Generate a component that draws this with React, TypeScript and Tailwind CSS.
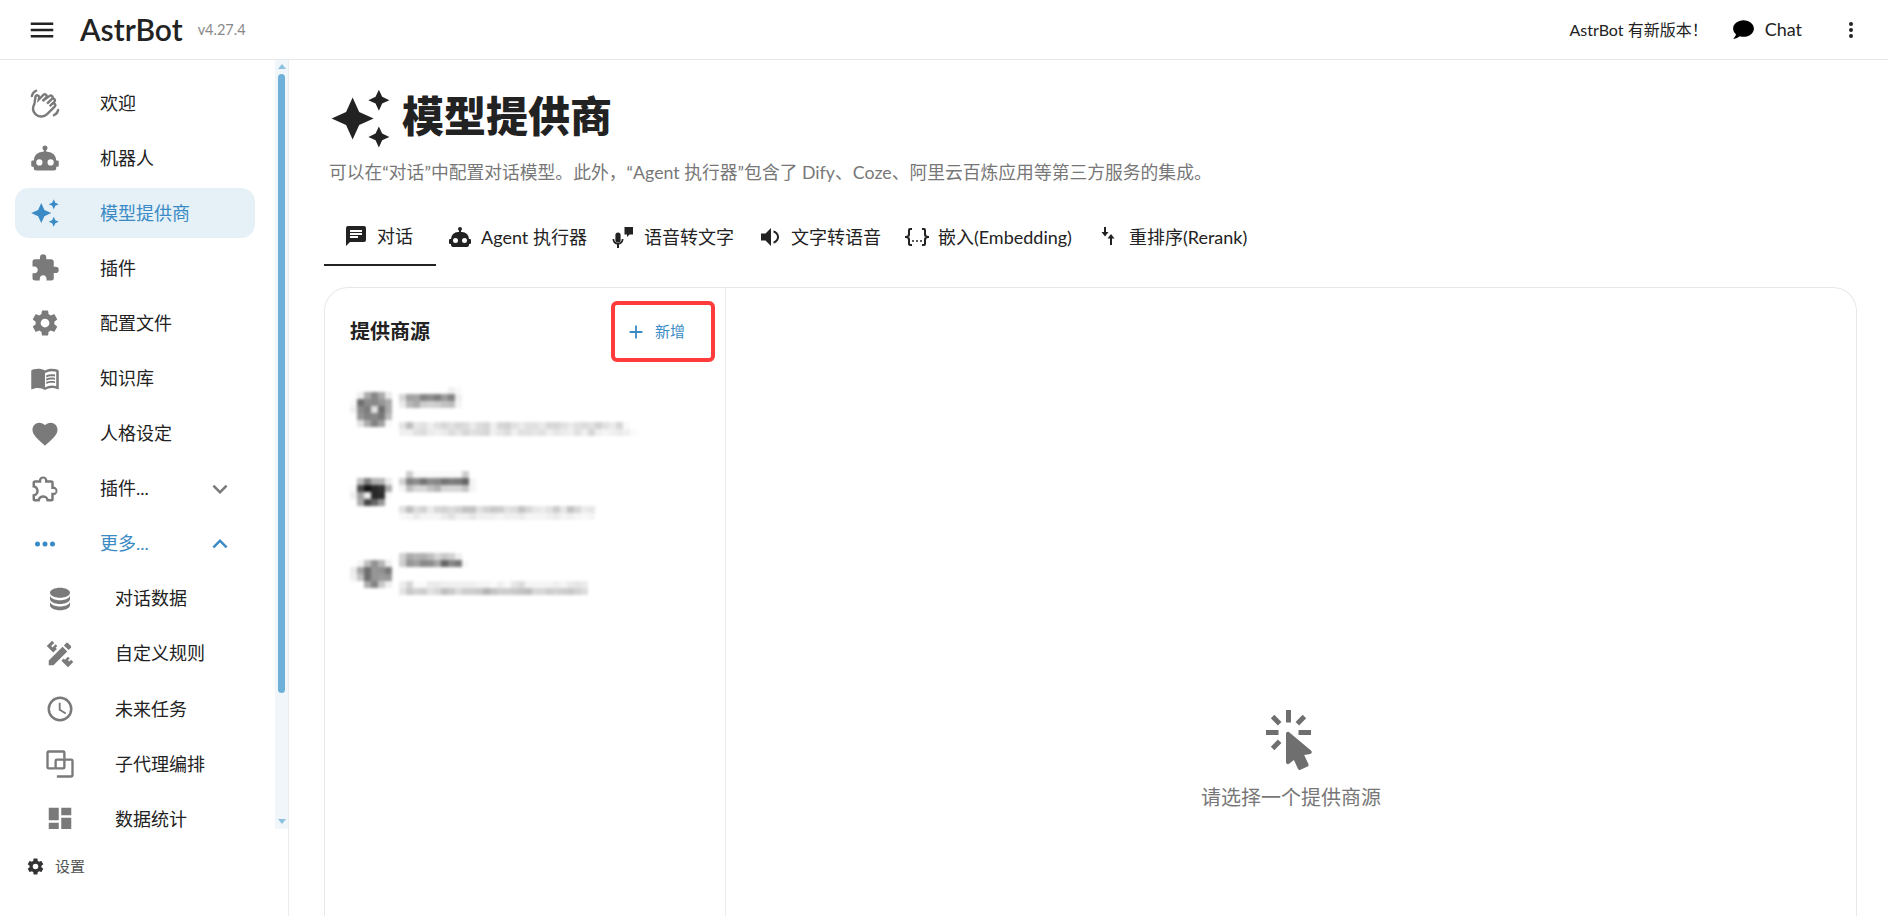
const font = 'font-["Lato","Noto_Sans_CJK_SC",sans-serif]';

const P = {
  menu: 'M3,6H21V8H3V6M3,11H21V13H3V11M3,16H21V18H3V16Z',
  robot: 'M12,2A2,2 0 0,1 14,4C14,4.74 13.6,5.39 13,5.73V7H14A7,7 0 0,1 21,14H22A1,1 0 0,1 23,15V18A1,1 0 0,1 22,19H21V20A2,2 0 0,1 19,22H5A2,2 0 0,1 3,20V19H2A1,1 0 0,1 1,18V15A1,1 0 0,1 2,14H3A7,7 0 0,1 10,7H11V5.73C10.4,5.39 10,4.74 10,4A2,2 0 0,1 12,2M7.5,13A2.5,2.5 0 0,0 5,15.5A2.5,2.5 0 0,0 7.5,18A2.5,2.5 0 0,0 10,15.5A2.5,2.5 0 0,0 7.5,13M16.5,13A2.5,2.5 0 0,0 14,15.5A2.5,2.5 0 0,0 16.5,18A2.5,2.5 0 0,0 19,15.5A2.5,2.5 0 0,0 16.5,13Z',
  creation: 'M19,1L17.74,3.75L15,5L17.74,6.26L19,9L20.25,6.26L23,5L20.25,3.75M9,4L6.5,9.5L1,12L6.5,14.5L9,20L11.5,14.5L17,12L11.5,9.5M19,15L17.74,17.74L15,19L17.74,20.25L19,23L20.25,20.25L23,19L20.25,17.74',
  puzzle: 'M20.5,11H19V7C19,5.89 18.1,5 17,5H13V3.5A2.5,2.5 0 0,0 10.5,1A2.5,2.5 0 0,0 8,3.5V5H4A2,2 0 0,0 2,7V10.8H3.5C5,10.8 6.2,12 6.2,13.5C6.2,15 5,16.2 3.5,16.2H2V20A2,2 0 0,0 4,22H7.8V20.5C7.8,19 9,17.8 10.5,17.8C12,17.8 13.2,19 13.2,20.5V22H17A2,2 0 0,0 19,20V16H20.5A2.5,2.5 0 0,0 23,13.5A2.5,2.5 0 0,0 20.5,11Z',
  puzzleOutline: 'M22,13.5C22,15.26 20.7,16.72 19,16.96V20A2,2 0 0,1 17,22H13.2V21.7A2.7,2.7 0 0,0 10.5,19C9,19 7.8,20.21 7.8,21.7V22H4A2,2 0 0,1 2,20V16.2H2.3C3.79,16.2 5,15 5,13.5C5,12 3.79,10.8 2.3,10.8H2V7A2,2 0 0,1 4,5H7.04C7.28,3.3 8.74,2 10.5,2C12.26,2 13.72,3.3 13.96,5H17A2,2 0 0,1 19,7V10.04C20.7,10.28 22,11.74 22,13.5M17,15H19A1.5,1.5 0 0,0 20.5,13.5A1.5,1.5 0 0,0 19,12H17V7H12V5A1.5,1.5 0 0,0 10.5,3.5A1.5,1.5 0 0,0 9,5V7H4V9.12C5.76,9.8 7,11.5 7,13.5C7,15.5 5.75,17.2 4,17.88V20H6.12C6.8,18.25 8.5,17 10.5,17C12.5,17 14.2,18.25 14.88,20H17V15Z',
  cog: 'M12,15.5A3.5,3.5 0 0,1 8.5,12A3.5,3.5 0 0,1 12,8.5A3.5,3.5 0 0,1 15.5,12A3.5,3.5 0 0,1 12,15.5M19.43,12.97C19.47,12.65 19.5,12.33 19.5,12C19.5,11.67 19.47,11.34 19.43,11L21.54,9.37C21.73,9.22 21.78,8.95 21.66,8.73L19.66,5.27C19.54,5.05 19.27,4.96 19.05,5.05L16.56,6.05C16.04,5.66 15.5,5.32 14.87,5.07L14.5,2.42C14.46,2.18 14.25,2 14,2H10C9.75,2 9.54,2.18 9.5,2.42L9.13,5.07C8.5,5.32 7.96,5.66 7.44,6.05L4.95,5.05C4.73,4.96 4.46,5.05 4.34,5.27L2.34,8.73C2.21,8.95 2.27,9.22 2.46,9.37L4.57,11C4.53,11.34 4.5,11.67 4.5,12C4.5,12.33 4.53,12.65 4.57,12.97L2.46,14.63C2.27,14.78 2.21,15.05 2.34,15.27L4.34,18.73C4.46,18.95 4.73,19.03 4.95,18.95L7.44,17.94C7.96,18.34 8.5,18.68 9.13,18.93L9.5,21.58C9.54,21.82 9.75,22 10,22H14C14.25,22 14.46,21.82 14.5,21.58L14.87,18.93C15.5,18.67 16.04,18.34 16.56,17.94L19.05,18.95C19.27,19.03 19.54,18.95 19.66,18.73L21.66,15.27C21.78,15.05 21.73,14.78 21.54,14.63L19.43,12.97Z',
  book: 'M12 21.5C10.65 20.65 8.2 20 6.5 20C4.85 20 3.15 20.3 1.75 21.05C1.65 21.1 1.6 21.1 1.5 21.1C1.25 21.1 1 20.85 1 20.6V6C1.6 5.55 2.25 5.25 3 5C4.11 4.65 5.33 4.5 6.5 4.5C8.45 4.5 10.55 4.9 12 6C13.45 4.9 15.55 4.5 17.5 4.5C18.67 4.5 19.89 4.65 21 5C21.75 5.25 22.4 5.55 23 6V20.6C23 20.85 22.75 21.1 22.5 21.1C22.4 21.1 22.35 21.1 22.25 21.05C20.85 20.3 19.15 20 17.5 20C15.8 20 13.35 20.65 12 21.5M12 8V19.5C13.35 18.65 15.8 18 17.5 18C18.7 18 19.9 18.15 21 18.5V7C19.9 6.65 18.7 6.5 17.5 6.5C15.8 6.5 13.35 7.15 12 8M13 11.5C14.11 10.82 15.6 10.5 17.5 10.5C18.41 10.5 19.26 10.59 20 10.78V9.23C19.13 9.08 18.29 9 17.5 9C15.73 9 14.23 9.28 13 9.84V11.5M17.5 11.67C15.79 11.67 14.29 11.93 13 12.46V14.15C14.11 13.5 15.6 13.16 17.5 13.16C18.54 13.16 19.38 13.24 20 13.4V11.9C19.13 11.74 18.29 11.67 17.5 11.67M20 14.57C19.13 14.41 18.29 14.33 17.5 14.33C15.67 14.33 14.17 14.6 13 15.13V16.82C14.11 16.16 15.6 15.83 17.5 15.83C18.54 15.83 19.38 15.91 20 16.07V14.57Z',
  heart: 'M12,21.35L10.55,20.03C5.4,15.36 2,12.27 2,8.5C2,5.41 4.42,3 7.5,3C9.24,3 10.91,3.81 12,5.08C13.09,3.81 14.76,3 16.5,3C19.58,3 22,5.41 22,8.5C22,12.27 18.6,15.36 13.45,20.03L12,21.35Z',
  dots: 'M16,12A2,2 0 0,1 18,10A2,2 0 0,1 20,12A2,2 0 0,1 18,14A2,2 0 0,1 16,12M10,12A2,2 0 0,1 12,10A2,2 0 0,1 14,12A2,2 0 0,1 12,14A2,2 0 0,1 10,12M4,12A2,2 0 0,1 6,10A2,2 0 0,1 8,12A2,2 0 0,1 6,14A2,2 0 0,1 4,12Z',
  chevronDown: 'M7.41,8.58L12,13.17L16.59,8.58L18,10L12,16L6,10L7.41,8.58Z',
  chevronUp: 'M7.41,15.41L12,10.83L16.59,15.41L18,14L12,8L6,14L7.41,15.41Z',
  database: 'M12,3C7.58,3 4,4.79 4,7C4,9.21 7.58,11 12,11C16.42,11 20,9.21 20,7C20,4.79 16.42,3 12,3M4,9V12C4,14.21 7.58,16 12,16C16.42,16 20,14.21 20,12V9C20,11.21 16.42,13 12,13C7.58,13 4,11.21 4,9M4,14V17C4,19.21 7.58,21 12,21C16.42,21 20,19.21 20,17V14C20,16.21 16.42,18 12,18C7.58,18 4,16.21 4,14Z',
  ruler: 'M3 17.25V21H6.75L17.81 9.93L14.06 6.18L3 17.25M22.61 18.36L18.36 22.61L13.16 17.41L14.93 15.64L15.93 16.64L18.4 14.16L19.82 15.58L18.36 17L19.42 18L20.84 16.6L22.61 18.36M6.61 10.83L1.39 5.64L5.64 1.39L7.4 3.16L4.93 5.64L6 6.7L8.46 4.22L9.88 5.64L8.46 7.05L9.46 8.05L6.61 10.83M20.71 7C21.1 6.61 21.1 6 20.71 5.59L18.37 3.29C18 2.9 17.35 2.9 16.96 3.29L15.12 5.12L18.87 8.87L20.71 7Z',
  clock: 'M12,20A8,8 0 0,0 20,12A8,8 0 0,0 12,4A8,8 0 0,0 4,12A8,8 0 0,0 12,20M12,2A10,10 0 0,1 22,12A10,10 0 0,1 12,22C6.47,22 2,17.5 2,12A10,10 0 0,1 12,2M12.5,7V12.25L17,14.92L16.25,16.15L11,13V7H12.5Z',
  dashboard: 'M13,3V9H21V3M13,21H21V11H13M3,21H11V15H3M3,13H11V3H3V13Z',
  message: 'M20,2H4A2,2 0 0,0 2,4V22L6,18H20A2,2 0 0,0 22,16V4C22,2.89 21.1,2 20,2M6,9H18V11H6M14,14H6V12H14M18,8H6V6H18',
  volume: 'M3,8.5V15.5H7.5L13,21V3L7.5,8.5H3M15.5,5.5V7.6C17.5,8.2 19,9.9 19,12C19,14.1 17.5,15.8 15.5,16.4V18.5C18.6,17.8 21,15.2 21,12C21,8.8 18.6,6.2 15.5,5.5Z',
  braces: 'M5,3H7V5H5V10A2,2 0 0,1 3,12A2,2 0 0,1 5,14V19H7V21H5C3.93,20.73 3,20.1 3,19V15A2,2 0 0,0 1,13H0V11H1A2,2 0 0,0 3,9V5A2,2 0 0,1 5,3M19,3A2,2 0 0,1 21,5V9A2,2 0 0,0 23,11H24V13H23A2,2 0 0,0 21,15V19A2,2 0 0,1 19,21H17V19H19V14A2,2 0 0,1 21,12A2,2 0 0,1 19,10V5H17V3H19M12,15A1,1 0 0,1 13,16A1,1 0 0,1 12,17A1,1 0 0,1 11,16A1,1 0 0,1 12,15M8,15A1,1 0 0,1 9,16A1,1 0 0,1 8,17A1,1 0 0,1 7,16A1,1 0 0,1 8,15M16,15A1,1 0 0,1 17,16A1,1 0 0,1 16,17A1,1 0 0,1 15,16A1,1 0 0,1 16,15Z',
  click: 'M10.76,8.69A0.76,0.76 0 0,0 10,9.45V20.9C10,21.32 10.34,21.66 10.76,21.66C10.95,21.66 11.11,21.6 11.24,21.5L13.15,19.95L14.81,23.57C14.94,23.84 15.21,24 15.5,24C15.61,24 15.72,24 15.83,23.92L18.59,22.64C18.97,22.46 19.15,22 18.95,21.63L17.28,18L19.69,17.55C19.85,17.5 20,17.43 20.12,17.29C20.39,16.97 20.35,16.5 20,16.21L11.26,8.86L11.25,8.87C11.12,8.76 10.95,8.69 10.76,8.69M15,10V8H20V10H15M13.83,4.76L16.66,1.93L18.07,3.34L15.24,6.17L13.83,4.76M10,0H12V5H10V0M3.93,14.66L6.76,11.83L8.17,13.24L5.34,16.07L3.93,14.66M3.93,3.34L5.34,1.93L8.17,4.76L6.76,6.17L3.93,3.34M7,10H2V8H7V10',
  chat: 'M12,3C17.5,3 22,6.58 22,11C22,15.42 17.5,19 12,19C10.76,19 9.57,18.82 8.47,18.5C5.55,21 2,21 2,21C4.33,18.67 4.7,17.1 4.75,16.5C3.05,15.07 2,13.13 2,11C2,6.58 6.5,3 12,3Z',
  dotsV: 'M12,16A2,2 0 0,1 14,18A2,2 0 0,1 12,20A2,2 0 0,1 10,18A2,2 0 0,1 12,16M12,10A2,2 0 0,1 14,12A2,2 0 0,1 12,14A2,2 0 0,1 10,12A2,2 0 0,1 12,10M12,4A2,2 0 0,1 14,6A2,2 0 0,1 12,8A2,2 0 0,1 10,6A2,2 0 0,1 12,4Z',
  plus: 'M19,13H13V19H11V13H5V11H11V5H13V11H19V13Z',
  micMessage: 'M13.5 2H22V9.5H18.5L16 12V9.5H13.5ZM7 7.5A2.6 2.6 0 0 1 9.6 10.1V14.9A2.6 2.6 0 0 1 4.4 14.9V10.1A2.6 2.6 0 0 1 7 7.5ZM1.5 14H3.2C3.2 16.2 4.9 18 7 18C9.1 18 10.8 16.2 10.8 14H12.5C12.5 16.8 10.5 19.1 8 19.6V23H6V19.6C3.5 19.1 1.5 16.8 1.5 14Z',
  sort: 'M8 2H10V7H12.5L9 11.5L5.5 7H8ZM14 20H16V13.5H18.5L15 9L11.5 13.5H14Z',
};

function Icon({ d, size = 24, className = '' }: { d: string; size?: number; className?: string }) {
  return (
    <svg viewBox="0 0 24 24" width={size} height={size} fill="currentColor" className={`shrink-0 ${className}`}>
      <path d={d} />
    </svg>
  );
}

function WaveIcon() {
  return (
    <svg viewBox="0 0 24 24" width={30} height={30} fill="none" stroke="currentColor" strokeWidth="1.9" strokeLinecap="round" className="shrink-0">
      <path d="M3.6 12.5c-1.8 3.4-1.2 6.8 1.2 8.8 2.6 2.2 6.4 2 8.9-.4l6.2-6.2a1.5 1.5 0 0 0-2.1-2.1l-2 2 3.8-3.8a1.5 1.5 0 0 0-2.1-2.1l-3.8 3.8 4.1-4.1a1.5 1.5 0 0 0-2.1-2.1L10 10.4l3-3a1.5 1.5 0 0 0-2.1-2.1L7 9.2l.3-1.8a1.5 1.5 0 0 0-2.9-.6z" />
      <path d="M1.5 6.5c.3-2 1.6-3.6 3.4-4.3" />
      <path d="M22.5 17.5c-.3 2-1.6 3.6-3.4 4.3" />
    </svg>
  );
}

function SubagentIcon() {
  return (
    <svg viewBox="0 0 24 24" width={30} height={30} fill="none" stroke="currentColor" strokeWidth="1.9" className="shrink-0">
      <path d="M8.5 15.5H3A1 1 0 0 1 2 14.5V3A1 1 0 0 1 3 2H14.5A1 1 0 0 1 15.5 3V7.5" />
      <path d="M8.5 15.5V9.5A1 1 0 0 1 9.5 8.5H21A1 1 0 0 1 22 9.5V21A1 1 0 0 1 21 22H9.5" />
      <path d="M15.5 7.5V14.5A1 1 0 0 1 14.5 15.5H8.5" />
    </svg>
  );
}

type Item = { label: string; d?: string; custom?: 'wave' | 'sub'; sub?: boolean; active?: boolean; open?: boolean; chev?: 'up' | 'down' };

const navItems: Item[] = [
  { label: '欢迎', custom: 'wave' },
  { label: '机器人', d: P.robot },
  { label: '模型提供商', d: P.creation, active: true },
  { label: '插件', d: P.puzzle },
  { label: '配置文件', d: P.cog },
  { label: '知识库', d: P.book },
  { label: '人格设定', d: P.heart },
  { label: '插件...', d: P.puzzleOutline, chev: 'down' },
  { label: '更多...', d: P.dots, chev: 'up', open: true },
  { label: '对话数据', d: P.database, sub: true },
  { label: '自定义规则', d: P.ruler, sub: true },
  { label: '未来任务', d: P.clock, sub: true },
  { label: '子代理编排', custom: 'sub', sub: true },
  { label: '数据统计', d: P.dashboard, sub: true },
];

function NavRow({ item }: { item: Item }) {
  const blue = item.active || item.open;
  return (
    <div
      className={`flex items-center shrink-0 h-[50px] w-[240px] rounded-[14px] pr-[20px] ${item.sub ? 'pl-[30px]' : 'pl-[15px]'} ${item.active ? 'bg-[#e6f0f7]' : ''}`}
    >
      <span className={`flex w-[30px] justify-center ${blue ? 'text-[#3a8bc5]' : 'text-[#7a7a7a]'}`}>
        {item.custom === 'wave' && <WaveIcon />}
        {item.custom === 'sub' && <SubagentIcon />}
        {item.d && <Icon d={item.d} size={30} />}
      </span>
      <span className={`ml-[40px] flex-1 text-[18px] ${blue ? 'text-[#3a8bc5]' : 'text-[#222]'}`}>{item.label}</span>
      {item.chev && <Icon d={item.chev === 'up' ? P.chevronUp : P.chevronDown} size={30} className={blue ? 'text-[#3a8bc5]' : 'text-[#7a7a7a]'} />}
    </div>
  );
}

function Sidebar() {
  return (
    <aside className="flex flex-col w-[289px] shrink-0 border-r border-[#ececec]">
      <div className="flex h-[769px] overflow-hidden">
        <nav className="flex flex-col flex-1 gap-[5.1px] pl-[15px] pt-[18px] overflow-hidden">
          {navItems.map((it) => (
            <NavRow key={it.label} item={it} />
          ))}
        </nav>
        <div className="flex flex-col items-center w-[13px] bg-[#f0f6fa]">
          <div className="mt-[4px] h-0 w-0 border-x-[4px] border-b-[5px] border-x-transparent border-b-[#8cc0e0]" />
          <div className="mt-[5px] h-[619px] w-[7px] rounded-full bg-[#6fb0d8]" />
          <div className="mt-auto mb-[5px] h-0 w-0 border-x-[4px] border-t-[5px] border-x-transparent border-t-[#8cc0e0]" />
        </div>
      </div>
      <div className="flex items-center gap-[10px] pl-[26px] pt-[26px]">
        <Icon d={P.cog} size={19} className="text-[#333]" />
        <span className="text-[15px] text-[#555]">设置</span>
      </div>
    </aside>
  );
}

const tabs = [
  { label: '对话', d: P.message, active: true },
  { label: 'Agent 执行器', d: P.robot },
  { label: '语音转文字', d: P.micMessage },
  { label: '文字转语音', d: P.volume },
  { label: '嵌入(Embedding)', d: P.braces },
  { label: '重排序(Rerank)', d: P.sort },
];

function Mosaic({ rows, cell = 7 }: { rows: number[][]; cell?: number }) {
  const w = Math.max(...rows.map((r) => r.length));
  return (
    <svg width={w * cell} height={rows.length * cell} className="block blur-[1.5px] overflow-visible">
      {rows.map((r, y) =>
        r.map((g, x) => <rect key={`${x}-${y}`} x={x * cell} y={y * cell} width={cell} height={cell} fill={`rgb(${g},${g},${g})`} />),
      )}
    </svg>
  );
}

const avatars = [
  [
    [255, 240, 170, 135, 170, 235],
    [250, 110, 140, 135, 150, 170],
    [240, 140, 125, 225, 110, 170],
    [255, 150, 130, 135, 120, 185],
    [255, 225, 170, 130, 160, 250],
  ],
  [
    [255, 190, 125, 175, 180, 235],
    [250, 75, 20, 40, 50, 170],
    [240, 160, 235, 40, 45, 250],
    [255, 170, 70, 100, 150, 255],
  ],
  [
    [255, 245, 190, 145, 180, 240],
    [235, 165, 110, 150, 145, 120],
    [240, 195, 110, 150, 155, 150],
    [255, 255, 170, 130, 200, 240],
  ],
];

const lines = [
  [
    [255, 255, 255, 255, 255, 255, 255, 240, 250],
    [215, 160, 165, 130, 140, 125, 155, 130, 240],
    [235, 185, 170, 205, 210, 205, 195, 190, 245],
    [255],
    [255],
    [228, 190, 230, 225, 240, 225, 215, 225, 215, 220, 235, 220, 215, 240, 215, 210, 225, 235, 225, 225, 235, 215, 215, 225, 235, 225, 220, 225, 210, 225, 235, 215, 250],
    [240, 240, 225, 220, 235, 240, 235, 220, 230, 215, 225, 220, 215, 240, 230, 220, 240, 225, 225, 230, 225, 240, 230, 235, 240, 225, 240, 215, 240, 245, 240, 235, 240, 250],
  ],
  [
    [255, 205, 250, 250, 250, 250, 250, 250, 250, 205, 255],
    [210, 130, 140, 115, 140, 135, 115, 125, 120, 100, 245],
    [245, 190, 215, 215, 195, 180, 215, 215, 215, 195, 245],
    [255],
    [255],
    [225, 190, 220, 210, 235, 215, 210, 220, 210, 195, 195, 225, 210, 200, 205, 225, 220, 195, 215, 230, 235, 225, 205, 230, 195, 215, 235, 230],
    [248, 245, 235, 245, 245, 245, 235, 225, 240, 240, 230, 240, 240, 240, 245, 240, 240, 235, 245, 245, 245, 240, 235, 245, 240, 245, 248, 245],
  ],
  [
    [210, 170, 180, 175, 190, 215, 200, 210, 240],
    [205, 150, 160, 135, 140, 165, 100, 135, 120, 250],
    [255],
    [255],
    [238, 215, 250, 250, 235, 235, 240, 240, 240, 240, 240, 245, 245, 250, 240, 250, 230, 220, 245, 245, 245, 245, 240, 245, 235, 230, 235],
    [228, 200, 210, 205, 225, 215, 190, 200, 220, 205, 205, 200, 180, 195, 205, 205, 200, 195, 190, 215, 215, 205, 210, 205, 200, 210, 220],
  ],
];

function ProviderRow({ i, mt, avatarTop }: { i: number; mt: string; avatarTop: string }) {
  return (
    <div className={`flex ${mt}`}>
      <div className={avatarTop}>
        <Mosaic rows={avatars[i]} />
      </div>
      <div className="ml-[7px]">
        <Mosaic rows={lines[i]} />
      </div>
    </div>
  );
}

export default function App() {
  return (
    <div className={`flex flex-col h-screen overflow-hidden bg-white text-[#222] ${font}`}>
      <header className="flex items-center h-[60px] shrink-0 border-b border-[#e6e6e6] pl-[27px] pr-[25px]">
        <Icon d={P.menu} size={30} className="text-[#222]" />
        <span className="ml-[23px] text-[30px] font-semibold">AstrBot</span>
        <span className="ml-[15px] text-[14.5px] text-[#888]">v4.27.4</span>
        <span className="ml-auto text-[16px] text-[#222]">AstrBot 有新版本！</span>
        <span className="ml-[23px]">
          <Icon d={P.chat} size={25} className="text-black" />
        </span>
        <span className="ml-[9px] text-[18px]">Chat</span>
        <span className="ml-[37px]">
          <Icon d={P.dotsV} size={24} className="text-[#222]" />
        </span>
      </header>
      <div className="flex flex-1 min-h-0">
        <Sidebar />
        <main className="flex flex-col flex-1 min-w-0 pl-[35px] pr-[31px] pt-[27px]">
          <div className="flex items-center pl-[5px]">
            <Icon d={P.creation} size={63} className="text-[#222]" />
            <h1 className="ml-[10px] pb-[5px] text-[42px] leading-[58px] font-black">模型提供商</h1>
          </div>
          <p className="mt-[10px] pl-[5px] text-[17.8px] leading-[24px] text-[#777]">
            可以在“对话”中配置对话模型。此外，“Agent 执行器”包含了 Dify、Coze、阿里云百炼应用等第三方服务的集成。
          </p>
          <div className="flex mt-[24px] h-[58px]">
            {tabs.map((t) => (
              <div
                key={t.label}
                className={`flex items-center justify-center gap-[9px] text-[18px] ${t.active ? 'w-[112px] pl-[12px] pr-[15px] border-b-2 border-[#222]' : 'px-[12px]'}`}
              >
                <Icon d={t.d} size={24} className="text-[#222]" />
                <span>{t.label}</span>
              </div>
            ))}
          </div>
          <section className="flex flex-1 mt-[21px] rounded-t-[24px] border border-b-0 border-[#e8e8e8]">
            <div className="w-[401px] shrink-0 border-r border-[#ececec]">
              <div className="flex items-start justify-between pl-[25px] pr-[10px] pt-[13px]">
                <h2 className="mt-[15px] text-[20px] font-bold">提供商源</h2>
                <button className="flex items-center gap-[8px] w-[104px] h-[61px] pl-[10px] border-4 border-[#ff3b3b] rounded-[6px] text-[15px] text-[#3a8bc5]">
                  <Icon d={P.plus} size={22} />
                  <span>新增</span>
                </button>
              </div>
              <div className="pl-[25px]">
                <ProviderRow i={0} mt="mt-[25px]" avatarTop="mt-[5px]" />
                <ProviderRow i={1} mt="mt-[35px]" avatarTop="mt-[7px]" />
                <ProviderRow i={2} mt="mt-[33px]" avatarTop="mt-[7px]" />
              </div>
            </div>
            <div className="flex flex-col flex-1 items-center pt-[422px]">
              <Icon d={P.click} size={60} className="text-[#6f6f6f]" />
              <span className="mt-[13px] text-[20px] leading-[28px] text-[#777]">请选择一个提供商源</span>
            </div>
          </section>
        </main>
      </div>
    </div>
  );
}
